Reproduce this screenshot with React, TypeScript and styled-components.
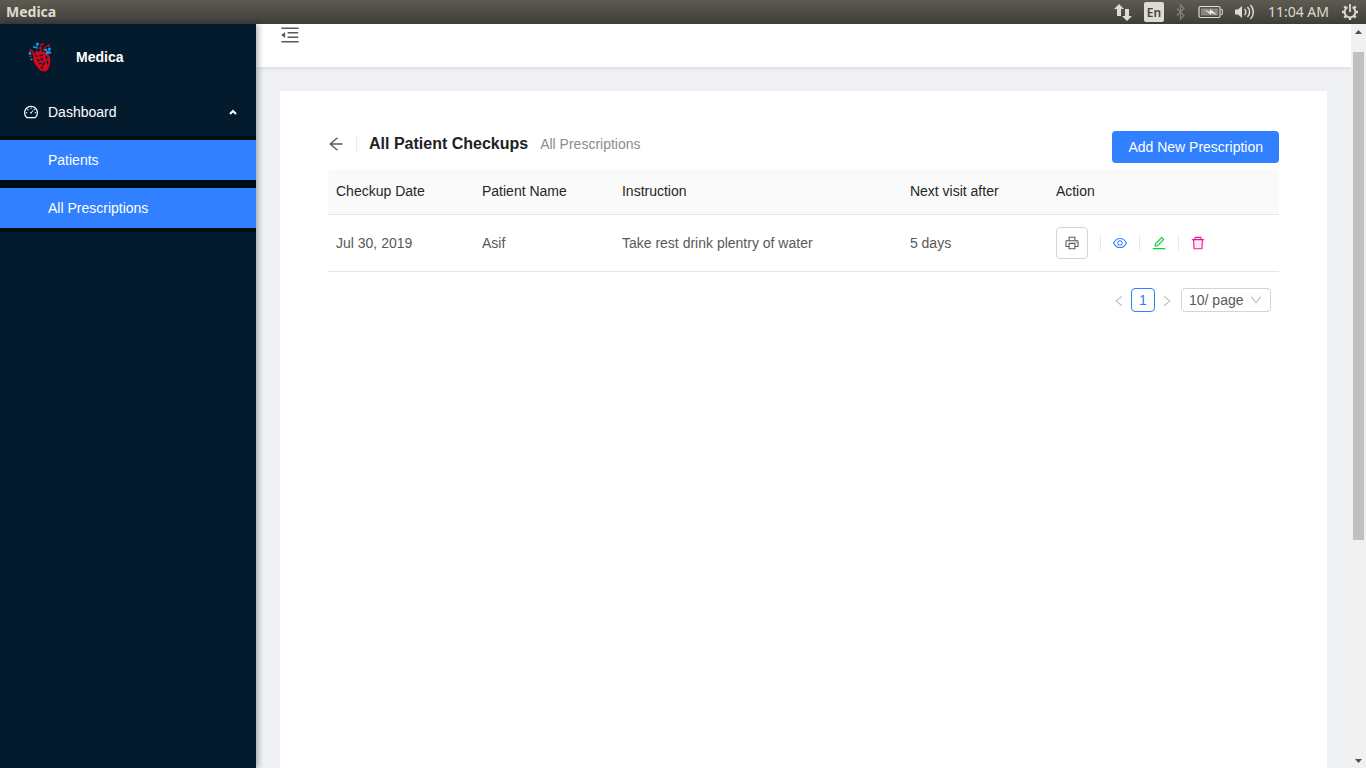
import React from "react";
import styled, { createGlobalStyle } from "styled-components";
import {
  AiOutlineArrowLeft,
  AiOutlineDashboard,
  AiOutlineDown,
  AiOutlineEdit,
  AiOutlineEye,
  AiOutlineLeft,
  AiOutlineMenuFold,
  AiOutlinePrinter,
  AiOutlineRight,
} from "react-icons/ai";

const blue = "#3180ff";
const sans = `"Liberation Sans", Arial, sans-serif`;

const GlobalStyle = createGlobalStyle`
  *, *::before, *::after { box-sizing: border-box; }
  body {
    margin: 0;
    font: 14px/21px ${sans};
    color: #595959;
    background: #eef0f4;
  }
  button, select { font: inherit; color: inherit; }
  button { padding: 0; border: 0; background: none; cursor: pointer; }
  a { color: inherit; text-decoration: none; }
`;

const Desktop = styled.div`
  display: flex;
  flex-direction: column;
  height: 100vh;
  overflow: hidden;
`;

const SystemBar = styled.div`
  flex: none;
  height: 24px;
  padding: 0 7px 0 6px;
  display: flex;
  align-items: center;
  justify-content: space-between;
  background: linear-gradient(#5d5b51, #3f3e39);
  color: #dfdbd2;
  font-family: "Noto Sans", "Open Sans", sans-serif;
`;

const WindowTitle = styled.strong`
  padding-bottom: 2px;
  font-size: 14px;
`;

const Indicators = styled.div`
  display: flex;
  align-items: center;
  gap: 12px;
  svg { display: block; }
`;

const Clock = styled.time`
  padding-bottom: 2px;
  font-size: 14px;
  white-space: nowrap;
`;

const Language = styled.span`
  width: 20px;
  height: 20px;
  border-radius: 2px;
  background: #dfdbd2;
  color: #45443f;
  font-size: 12px;
  font-weight: 600;
  line-height: 21px;
  text-align: center;
`;

const Page = styled.div`
  flex: 1;
  min-height: 0;
  display: flex;
`;

const Sidebar = styled.aside`
  flex: none;
  width: 256px;
  background: #041a2d;
  color: #fff;
  box-shadow: 2px 0 6px rgba(0, 21, 41, 0.35);
  z-index: 1;
`;

const Brand = styled.a`
  height: 64px;
  padding: 2px 28px 0;
  display: flex;
  align-items: center;
  gap: 24px;
  font-weight: bold;
`;

const MenuTitle = styled.button`
  width: 100%;
  height: 40px;
  margin: 4px 0;
  padding: 0 18px 0 23px;
  display: flex;
  align-items: center;
  gap: 9px;
  color: #fff;
  span { flex: 1; text-align: left; }
`;

const SubMenu = styled.nav`
  padding: 4px 0;
  display: flex;
  flex-direction: column;
  gap: 8px;
  background: #000f17;
`;

const SubMenuLink = styled.a`
  padding-left: 48px;
  line-height: 40px;
  background: ${blue};
`;

const Content = styled.div`
  flex: 1;
  min-width: 0;
  display: flex;
  flex-direction: column;
`;

const TopBar = styled.header`
  flex: none;
  height: 43px;
  padding: 0 23px;
  background: #fff;
  box-shadow: 0 1px 4px rgba(0, 21, 41, 0.1);
`;

const FoldButton = styled.button`
  display: block;
  height: 22px;
  svg { display: block; }
`;

const Card = styled.main`
  flex: 1;
  margin: 24px 24px 0;
  padding: 40px 48px;
  background: #fff;
`;

const PageHeader = styled.div`
  display: flex;
  align-items: flex-start;
  margin-bottom: 6px;
`;

const Heading = styled.div`
  flex: 1;
  display: flex;
  align-items: center;
  gap: 12px;
  height: 25px;
`;

const IconButton = styled.button<{ $color?: string }>`
  display: flex;
  justify-content: center;
  width: 14px;
  color: ${(p) => p.$color ?? "#595959"};
  svg { flex: none; }
`;

const BackButton = styled(IconButton)`
  width: 16px;
`;

const Divider = styled.span`
  width: 1px;
  height: 14px;
  background: #e8e8e8;
`;

const Title = styled.h1`
  margin: 0;
  font-size: 16px;
  line-height: 24px;
  color: #222;
`;

const SubTitle = styled.span`
  padding-top: 2px;
  color: #8c8c8c;
`;

const PrimaryButton = styled.button`
  height: 32px;
  padding: 0 16px;
  border-radius: 4px;
  background: ${blue};
  color: #fff;
`;

const Table = styled.table`
  width: 100%;
  table-layout: fixed;
  border-collapse: separate;
  border-spacing: 0;
`;

const Col = styled.col<{ $share: number }>`
  width: ${(p) => p.$share}%;
`;

const HeadCell = styled.th`
  padding: 12px 8px;
  border-bottom: 1px solid #e6e6e6;
  background: #fafafa;
  color: #262626;
  font-weight: normal;
  text-align: left;
  &:first-child { border-top-left-radius: 4px; }
  &:last-child { border-top-right-radius: 4px; }
`;

const Cell = styled.td`
  padding: 12px 8px;
  border-bottom: 1px solid #e6e6e6;
  line-height: 20px;
`;

const Actions = styled.div`
  display: flex;
  align-items: center;
  gap: 12px;
`;

const PrintButton = styled.button`
  width: 32px;
  height: 32px;
  display: flex;
  align-items: center;
  justify-content: center;
  border: 1px solid #d4d4d4;
  border-radius: 4px;
`;

const Pagination = styled.nav`
  display: flex;
  justify-content: flex-end;
  padding: 16px 8px 0;
`;

const PageStep = styled.button`
  width: 24px;
  height: 24px;
  padding-top: 2px;
  display: flex;
  align-items: center;
  justify-content: center;
  color: #bfbfbf;
`;

const PageNumber = styled.button`
  width: 24px;
  height: 24px;
  border: 1px solid ${blue};
  border-radius: 4px;
  color: ${blue};
`;

const SizePicker = styled.div`
  position: relative;
  margin-left: 2px;
  svg {
    position: absolute;
    right: 8px;
    top: 5px;
    color: #bfbfbf;
    pointer-events: none;
  }
`;

const SizeSelect = styled.select`
  display: block;
  width: 90px;
  height: 24px;
  padding: 0 7px;
  appearance: none;
  border: 1px solid #d4d4d4;
  border-radius: 4px;
  background: #fff;
`;

const ScrollTrack = styled.div`
  flex: none;
  width: 15px;
  padding: 6px 2px 5px;
  display: flex;
  flex-direction: column;
  align-items: center;
  background: #f0f0f0;
`;

const ScrollThumb = styled.div`
  width: 11px;
  height: 66.6%;
  margin: 18px 0 auto;
  background: #c0c0c0;
`;

const HeartLogo = () => (
  <svg width="24" height="30" viewBox="0 0 24 30" aria-hidden="true">
    <path
      d="M4 10.500L7 11.500 8 8.500 10.500 10 12.500 8 14.500 10 17 9.500 18.500 12C22 13 23 17 22 21.500 21 26 19.500 29.500 16.500 29.500 13 29.500 10 26.500 8 23.500 6 21 4.500 17.500 5.500 14.500Z"
      fill="#d5071c"
    />
    <path
      d="M7.500 13l1.500 1.500M12 13.500h2.500M9.500 17.500l1.500 1.500M13 16.500l1.500 1.500M18.500 14.500v2M11.500 21.500h1.500M16.500 20.500l-1.500 2.500M13.500 25l1 1.500M19.500 19v2.500"
      fill="none"
      stroke="#061a2d"
      strokeWidth="1.500"
      strokeLinecap="round"
    />
    <g fill="none" strokeWidth="1.200">
      <path d="M9 7V2M9 6L6 5M18 10l3-1V6M15 8l3-1" stroke="#0f8fdc" />
      <path d="M13 9V2M16 9l1-4 2-1M6 11L3 8" stroke="#c00c22" />
    </g>
    <g fill="#129be6">
      <circle cx="9.500" cy="2" r="1.500" />
      <circle cx="6" cy="5" r="1.100" />
      <circle cx="2" cy="11.500" r="1.400" />
      <circle cx="21.500" cy="7" r="1.400" />
      <circle cx="18" cy="8" r="1.300" />
      <circle cx="19.500" cy="11" r="1.600" />
      <circle cx="22" cy="10.500" r="1.200" />
      <circle cx="3.500" cy="17.500" r="1" />
    </g>
    <g fill="#c90a20">
      <circle cx="14.500" cy="2" r="1.300" />
      <circle cx="20.500" cy="3.500" r="1.300" />
      <circle cx="2.500" cy="8.500" r="1.200" />
      <circle cx="12" cy="6" r="1.100" />
      <circle cx="2.500" cy="14.500" r="1.100" />
    </g>
  </svg>
);

const CaretUp = () => (
  <svg width="10" height="8" viewBox="0 0 10 8" aria-hidden="true">
    <path d="M2 6l3-3 3 3" fill="none" stroke="#fff" strokeWidth="2" />
  </svg>
);

const TrashIcon = () => (
  <svg width="14" height="14" viewBox="64 64 896 896" aria-hidden="true">
    <path d="M292.7 840h438.6l24.2-512h-487z" fill="#ffe6f4" />
    <path
      fill="currentColor"
      d="M864 256H736v-80c0-35.3-28.7-64-64-64H352c-35.3 0-64 28.7-64 64v80H160c-17.7 0-32 14.3-32 32v32c0 4.4 3.6 8 8 8h60.4l24.7 523c1.6 34.1 29.8 61 63.9 61h454c34.2 0 62.3-26.8 63.9-61l24.7-523H888c4.4 0 8-3.6 8-8v-32c0-17.7-14.3-32-32-32zm-504-72h304v72H360v-72zm371.3 656H292.7l-24.2-512h487l-24.2 512z"
    />
  </svg>
);

const NetworkIcon = () => (
  <svg width="18" height="17" viewBox="0 0 18 17" fill="#dfdbd2" aria-hidden="true">
    <path d="M5 0l5 5H7v7H3V5H0z" />
    <path d="M13 17l5-5h-3V5h-4v7H8z" />
  </svg>
);

const BluetoothIcon = () => (
  <svg width="10" height="16" viewBox="0 0 10 16" aria-hidden="true">
    <path d="M1 4.500l7 7-3.500 3.500V1L8 4.500l-7 7" fill="none" stroke="#85837a" strokeWidth="1.200" />
  </svg>
);

const BatteryIcon = () => (
  <svg width="25" height="14" viewBox="0 0 25 14" aria-hidden="true">
    <rect x="1" y="1.500" width="21" height="11" rx="1.500" fill="none" stroke="#dfdbd2" strokeWidth="1.200" />
    <rect x="3" y="3.500" width="17" height="7" fill="#8a887f" />
    <path d="M23 4.500h1.300v5H23" fill="none" stroke="#dfdbd2" />
    <path d="M6 4l6 3V4l7 6-6-2v2z" fill="#efece4" />
  </svg>
);

const VolumeIcon = () => (
  <svg width="21" height="16" viewBox="0 0 21 16" aria-hidden="true">
    <path d="M0 5.500h3l4-3.500v12l-4-3.500H0z" fill="#dfdbd2" />
    <path
      d="M9.500 5a4 4 0 0 1 0 6M12.500 3a7 7 0 0 1 0 10M15.500 1a10 10 0 0 1 0 14"
      fill="none"
      stroke="#dfdbd2"
      strokeWidth="1.500"
    />
  </svg>
);

const gearTeeth = [45, 90, 135, 180, 225, 270, 315];

const PowerIcon = () => (
  <svg width="18" height="18" viewBox="0 0 18 18" fill="none" stroke="#dfdbd2" strokeWidth="1.800" aria-hidden="true">
    <path d="M6.500 4.200a5.400 5.400 0 1 0 5 0M9 1v8" />
    {gearTeeth.map((angle) => (
      <path key={angle} d="M9 1v2.500" strokeWidth="2.400" transform={`rotate(${angle} 9 9)`} />
    ))}
  </svg>
);

const ScrollArrow = ({ down = false }: { down?: boolean }) => (
  <svg width="7" height="4" viewBox="0 0 7 4" aria-hidden="true">
    <path d={down ? "M0 0h7L3.500 4z" : "M0 4h7L3.500 0z"} fill="#4d4d4d" />
  </svg>
);

const columns = [
  { label: "Checkup Date", share: 15.35 },
  { label: "Patient Name", share: 14.72 },
  { label: "Instruction", share: 30.28 },
  { label: "Next visit after", share: 15.35 },
  { label: "Action", share: 24.3 },
];

const checkups = [
  { date: "Jul 30, 2019", patient: "Asif", instruction: "Take rest drink plentry of water", next: "5 days" },
];

export default function App() {
  return (
    <Desktop>
      <GlobalStyle />
      <SystemBar>
        <WindowTitle>Medica</WindowTitle>
        <Indicators>
          <NetworkIcon />
          <Language>En</Language>
          <BluetoothIcon />
          <BatteryIcon />
          <VolumeIcon />
          <Clock>11:04 AM</Clock>
          <PowerIcon />
        </Indicators>
      </SystemBar>
      <Page>
        <Sidebar>
          <Brand href="#">
            <HeartLogo />
            Medica
          </Brand>
          <MenuTitle aria-expanded="true">
            <AiOutlineDashboard size={16} />
            <span>Dashboard</span>
            <CaretUp />
          </MenuTitle>
          <SubMenu>
            <SubMenuLink href="#patients">Patients</SubMenuLink>
            <SubMenuLink href="#prescriptions">All Prescriptions</SubMenuLink>
          </SubMenu>
        </Sidebar>
        <Content>
          <TopBar>
            <FoldButton aria-label="Collapse menu">
              <AiOutlineMenuFold size={22} />
            </FoldButton>
          </TopBar>
          <Card>
            <PageHeader>
              <Heading>
                <BackButton aria-label="Back">
                  <AiOutlineArrowLeft size={18} />
                </BackButton>
                <Divider />
                <Title>All Patient Checkups</Title>
                <SubTitle>All Prescriptions</SubTitle>
              </Heading>
              <PrimaryButton>Add New Prescription</PrimaryButton>
            </PageHeader>
            <Table>
              <colgroup>
                {columns.map((c) => (
                  <Col key={c.label} $share={c.share} />
                ))}
              </colgroup>
              <thead>
                <tr>
                  {columns.map((c) => (
                    <HeadCell key={c.label}>{c.label}</HeadCell>
                  ))}
                </tr>
              </thead>
              <tbody>
                {checkups.map((row) => (
                  <tr key={row.date}>
                    <Cell>{row.date}</Cell>
                    <Cell>{row.patient}</Cell>
                    <Cell>{row.instruction}</Cell>
                    <Cell>{row.next}</Cell>
                    <Cell>
                      <Actions>
                        <PrintButton aria-label="Print">
                          <AiOutlinePrinter size={16} />
                        </PrintButton>
                        <Divider />
                        <IconButton $color={blue} aria-label="View">
                          <AiOutlineEye size={16} />
                        </IconButton>
                        <Divider />
                        <IconButton $color="#00d42f" aria-label="Edit">
                          <AiOutlineEdit size={16} />
                        </IconButton>
                        <Divider />
                        <IconButton $color="#eb1494" aria-label="Delete">
                          <TrashIcon />
                        </IconButton>
                      </Actions>
                    </Cell>
                  </tr>
                ))}
              </tbody>
            </Table>
            <Pagination aria-label="Pages">
              <PageStep aria-label="Previous page">
                <AiOutlineLeft size={14} />
              </PageStep>
              <PageNumber aria-current="page">1</PageNumber>
              <PageStep aria-label="Next page">
                <AiOutlineRight size={14} />
              </PageStep>
              <SizePicker>
                <SizeSelect aria-label="Rows per page" defaultValue="10">
                  <option value="10">10/ page</option>
                  <option value="20">20/ page</option>
                </SizeSelect>
                <AiOutlineDown size={14} />
              </SizePicker>
            </Pagination>
          </Card>
        </Content>
        <ScrollTrack>
          <ScrollArrow />
          <ScrollThumb />
          <ScrollArrow down />
        </ScrollTrack>
      </Page>
    </Desktop>
  );
}
